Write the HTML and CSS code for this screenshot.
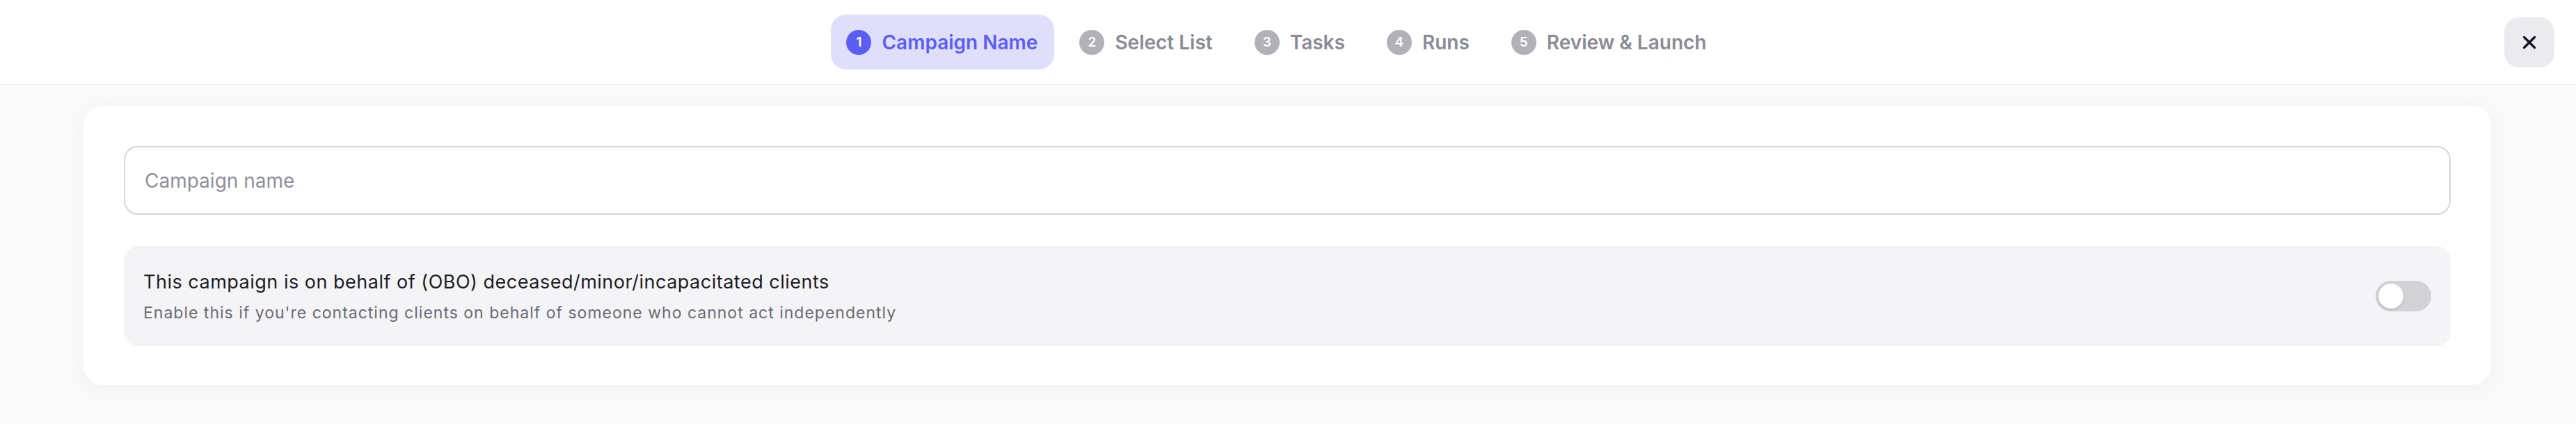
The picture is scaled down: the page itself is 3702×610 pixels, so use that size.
FILE: index.html
```html
<!DOCTYPE html>
<html lang="en">
<head>
<meta charset="utf-8">
<title>Campaign Wizard</title>
<link rel="stylesheet" href="styles.css">
</head>
<body>
<header class="topbar">
  <div class="spacer"></div>
  <nav class="steps">
    <div class="step active"><span class="num">1</span><span class="label">Campaign Name</span></div>
    <div class="step"><span class="num">2</span><span class="label">Select List</span></div>
    <div class="step"><span class="num">3</span><span class="label">Tasks</span></div>
    <div class="step"><span class="num">4</span><span class="label">Runs</span></div>
    <div class="step"><span class="num">5</span><span class="label">Review &amp; Launch</span></div>
  </nav>
  <div class="actions">
    <button class="close" aria-label="Close">
      <svg viewBox="0 0 20 20" width="20" height="20"><path d="M2.5 2.5 L17.5 17.5 M17.5 2.5 L2.5 17.5" stroke="#121826" stroke-width="3.4" stroke-linecap="round" fill="none"/></svg>
    </button>
  </div>
</header>
<main class="content">
  <section class="card">
    <input class="name-input" type="text" placeholder="Campaign name">
    <div class="option">
      <div class="option-text">
        <div class="option-title">This campaign is on behalf of (OBO) deceased/minor/incapacitated clients</div>
        <div class="option-desc">Enable this if you're contacting clients on behalf of someone who cannot act independently</div>
      </div>
      <span class="toggle"><span class="knob"></span></span>
    </div>
  </section>
</main>
</body>
</html>
```
FILE: styles.css
```css
* { box-sizing: border-box; }
html, body { margin: 0; padding: 0; }
body {
  background: #f9f9fa;
  font-family: Inter, "Noto Sans", "Liberation Sans", sans-serif;
  color: #1b1c26;
  height: 610px;
  overflow: hidden;
}
.topbar {
  height: 122px;
  background: #ffffff;
  border-bottom: 1px solid #efeff2;
  display: grid;
  grid-template-columns: 1fr auto 1fr;
  align-items: center;
  padding: 0 31px 0 0;
}
.steps {
  display: flex;
  align-items: center;
  gap: 14px;
}
.step {
  display: flex;
  align-items: center;
  gap: 15px;
  height: 79px;
  padding: 0 24px 0 22px;
  border-radius: 22px;
  color: #8b8b95;
  font-size: 28px;
  font-weight: 600;
}
.step .num {
  width: 36px;
  height: 36px;
  border-radius: 50%;
  background: #b1b1b7;
  color: #ffffff;
  font-size: 19px;
  font-weight: 600;
  display: flex;
  align-items: center;
  justify-content: center;
}
.step.active { background: #dfdffc; color: #5b5ef4; }
.step.active .num { background: #5b5ef4; }
.actions { display: flex; justify-content: flex-end; }
.close {
  width: 72px;
  height: 72px;
  border: none;
  border-radius: 21px;
  background: #ebebef;
  display: flex;
  align-items: center;
  justify-content: center;
  padding: 0;
}
.content { padding: 30px 122px 0 120px; }
.card {
  background: #ffffff;
  border-radius: 28px;
  padding: 58px 58px 56px;
  box-shadow: 0 4px 24px rgba(0, 0, 0, 0.035);
  display: flex;
  flex-direction: column;
  gap: 45px;
}
.name-input {
  height: 99px;
  width: 100%;
  border: 2px solid #d6d6da;
  border-radius: 20px;
  padding: 0 28px;
  font-family: inherit;
  font-size: 28px;
  color: #1b1c26;
  background: #ffffff;
  outline: none;
}
.name-input::placeholder { color: #8f8f9a; }
.option {
  height: 144px;
  background: #f4f4f6;
  border-radius: 21px;
  padding: 0 28px;
  display: flex;
  align-items: center;
  justify-content: space-between;
}
.option-text { display: flex; flex-direction: column; gap: 14px; }
.option-title { font-size: 27px; font-weight: 400; letter-spacing: 0.5px; color: #1b1c26; }
.option-desc { font-size: 23px; letter-spacing: 1px; color: #6a6a75; }
.toggle {
  width: 80px;
  height: 44px;
  border-radius: 22px;
  background: #d1d1d6;
  padding: 4px;
  display: flex;
  align-items: center;
}
.knob {
  width: 36px;
  height: 36px;
  border-radius: 50%;
  background: #ffffff;
  box-shadow: 0 1px 3px rgba(0, 0, 0, 0.2);
}
```
